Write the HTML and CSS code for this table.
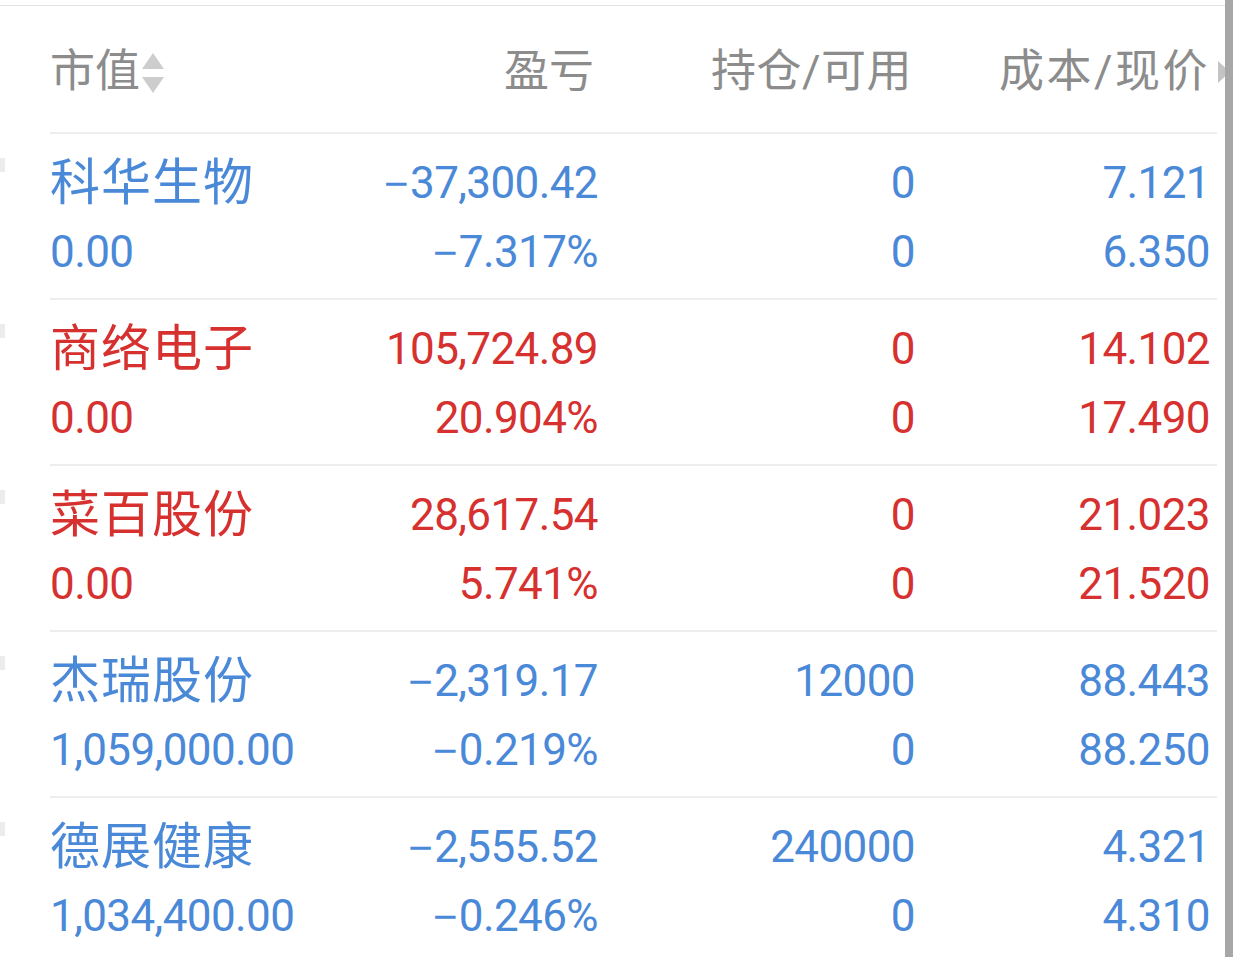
FILE: index.html
```html
<!DOCTYPE html>
<html lang="zh-CN">
<head>
<meta charset="utf-8">
<title>持仓</title>
<link rel="stylesheet" href="styles.css">
</head>
<body>
<div class="sheet">
  <div class="head">
    <div class="hcell hleft">市值<span class="sort"><i class="up"></i><i class="down"></i></span></div>
    <div class="hcell hright h2">盈亏</div>
    <div class="hcell hright h3">持仓/可用</div>
    <div class="hcell hright h4">成本/现价<span class="more"></span></div>
  </div>

  <div class="row blue">
    <div class="cell left"><div class="name">科华生物</div><div class="num">0.00</div></div>
    <div class="cell right c2"><div class="num"><span class="minus">−</span>37,300.42</div><div class="num"><span class="minus">−</span>7.317%</div></div>
    <div class="cell right"><div class="num">0</div><div class="num">0</div></div>
    <div class="cell right"><div class="num">7.121</div><div class="num">6.350</div></div>
  </div>

  <div class="row red">
    <div class="cell left"><div class="name">商络电子</div><div class="num">0.00</div></div>
    <div class="cell right c2"><div class="num">105,724.89</div><div class="num">20.904%</div></div>
    <div class="cell right"><div class="num">0</div><div class="num">0</div></div>
    <div class="cell right"><div class="num">14.102</div><div class="num">17.490</div></div>
  </div>

  <div class="row red">
    <div class="cell left"><div class="name">菜百股份</div><div class="num">0.00</div></div>
    <div class="cell right c2"><div class="num">28,617.54</div><div class="num">5.741%</div></div>
    <div class="cell right"><div class="num">0</div><div class="num">0</div></div>
    <div class="cell right"><div class="num">21.023</div><div class="num">21.520</div></div>
  </div>

  <div class="row blue">
    <div class="cell left"><div class="name">杰瑞股份</div><div class="num">1,059,000.00</div></div>
    <div class="cell right c2"><div class="num"><span class="minus">−</span>2,319.17</div><div class="num"><span class="minus">−</span>0.219%</div></div>
    <div class="cell right"><div class="num">12000</div><div class="num">0</div></div>
    <div class="cell right"><div class="num">88.443</div><div class="num">88.250</div></div>
  </div>

  <div class="row blue">
    <div class="cell left"><div class="name">德展健康</div><div class="num">1,034,400.00</div></div>
    <div class="cell right c2"><div class="num"><span class="minus">−</span>2,555.52</div><div class="num"><span class="minus">−</span>0.246%</div></div>
    <div class="cell right"><div class="num">240000</div><div class="num">0</div></div>
    <div class="cell right"><div class="num">4.321</div><div class="num">4.310</div></div>
  </div>
</div>
<div class="scrollbar"></div>
</body>
</html>
```

FILE: styles.css
```css
html, body {
  margin: 0;
  padding: 0;
  background: #ffffff;
}
body {
  display: flex;
  align-items: flex-start;
  height: 957px;
  overflow: hidden;
  font-family: Roboto, "Noto Sans CJK SC", sans-serif;
}
.sheet {
  flex: none;
  box-sizing: border-box;
  width: 1225px;
  height: 952px;
  margin-top: 5px;
  border-top: 1px solid #e3e3e3;
  padding-left: 50px;
  padding-right: 8px;
  overflow: hidden;
}
.scrollbar {
  flex: none;
  width: 8px;
  height: 957px;
  background: #a7a7a7;
}
.head, .row {
  display: grid;
  grid-template-columns: 250px 300px 315px 295px;
  width: 1167px;
}
.head {
  height: 121px;
  padding-top: 5px;
  border-bottom: 2px solid #eeeeee;
  align-items: center;
  color: #8c8c8c;
  font-size: 45px;
  line-height: 60px;
}
.hcell {
  display: flex;
  align-items: center;
}
.hright { justify-content: flex-end; }
.h2 { padding-right: 6px; }
.h3 { padding-right: 3px; letter-spacing: 0.5px; }
.h4 { padding-right: 0; letter-spacing: 2.5px; }
.sort {
  display: inline-flex;
  flex-direction: column;
  gap: 8px;
  margin-left: 2px;
  margin-top: 2px;
}
.sort i {
  display: block;
  width: 0;
  height: 0;
  border-left: 11px solid transparent;
  border-right: 11px solid transparent;
}
.sort .up { border-bottom: 16px solid #cdcdcd; }
.sort .down { border-top: 16px solid #cdcdcd; }
.more {
  display: inline-block;
  width: 0;
  height: 0;
  border-top: 11px solid transparent;
  border-bottom: 11px solid transparent;
  border-left: 12px solid #c4c4c4;
  margin-left: 8px;
  margin-right: -20px;
}
.row {
  position: relative;
  padding-top: 15px;
  padding-bottom: 11px;
  border-bottom: 2px solid #eeeeee;
  font-size: 44px;
  line-height: 69px;
}
.row::before {
  content: "";
  position: absolute;
  left: -50px;
  top: 24px;
  width: 5px;
  height: 14px;
  background: #ececec;
}
.blue { color: #4a88d8; }
.red { color: #d6302f; }
.cell.left { text-align: left; }
.cell.right { text-align: right; padding-right: 0; }
.cell.c2 { padding-right: 2px; }
.name {
  font-size: 50px;
  letter-spacing: 1px;
}
.num {
  white-space: nowrap;
  letter-spacing: -0.6px;
}
.minus {
  font-family: "Liberation Sans", sans-serif;
  font-size: 42px;
  margin-right: 2px;
}
```
